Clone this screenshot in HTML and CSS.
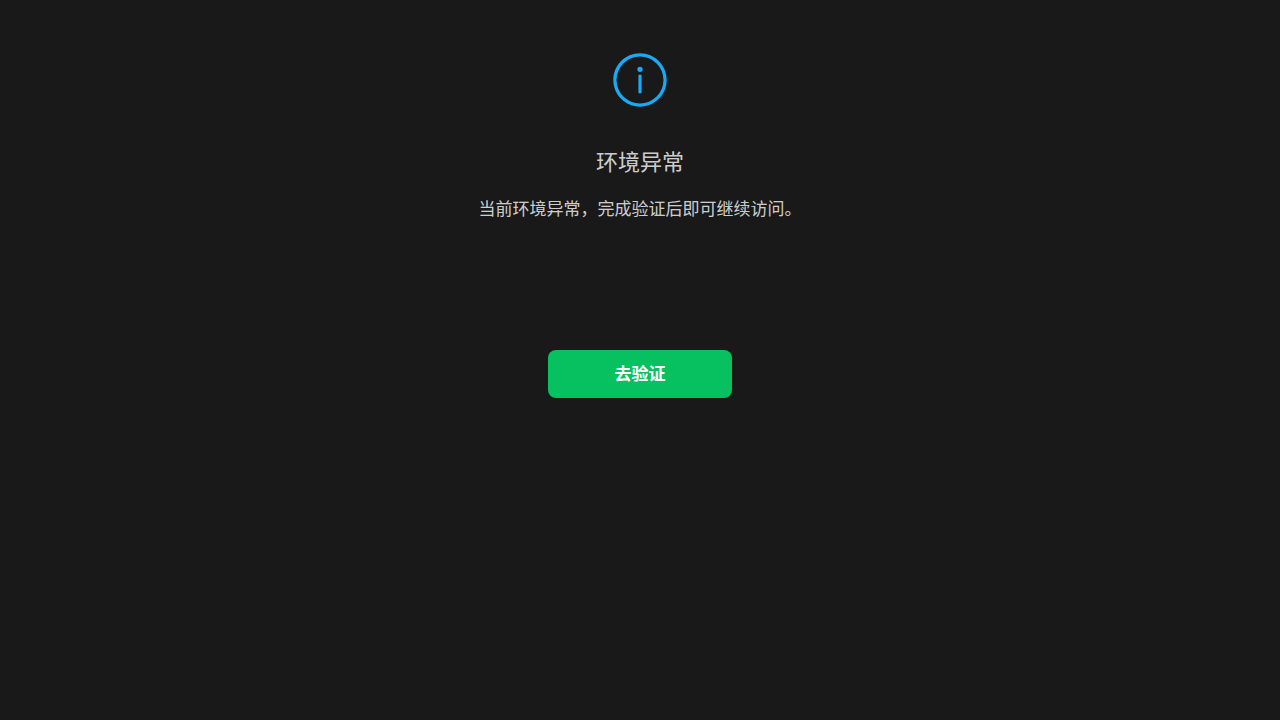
FILE: index.html
```html
<!DOCTYPE html>
<html lang="zh-CN">

<head>
    <meta charset="UTF-8">
    <meta name="viewport" content="width=device-width, initial-scale=1.0">
    <title>环境异常</title>

    <link rel="stylesheet" href="styles.css">
</head>

<body>
    <div class="msg">
        <div class="msg-icon">
            <svg viewBox="0 0 24 24" width="64" height="64">
                <path fill-rule="evenodd" d="M12 22C6.477 22 2 17.523 2 12S6.477 2 12 2s10 4.477 10 10-4.477 10-10 10zm0-1.2a8.8 8.8 0 1 0 0-17.6 8.8 8.8 0 0 0 0 17.6zM11.4 10h1.2v7h-1.2v-7zm.6-1a1 1 0 1 1 0-2 1 1 0 0 1 0 2z" />
            </svg>
        </div>
        <div class="msg-text">
            <h2 class="msg-title">环境异常</h2>
            <p class="msg-desc">当前环境异常，完成验证后即可继续访问。</p>
        </div>
        <div class="msg-opr">
            <a class="btn" href="#">去验证</a>
        </div>
    </div>
</body>

</html>
```
FILE: styles.css
```css
* {
    margin: 0;
    padding: 0;
    box-sizing: border-box;
}

body {
    background-color: #191919;
    color: rgba(255, 255, 255, 0.8);
    font-family: "Liberation Sans", "Noto Sans CJK SC", sans-serif;
}

.msg {
    display: flex;
    flex-direction: column;
    align-items: center;
    min-height: 100vh;
    padding-top: 48px;
    text-align: center;
}

.msg-icon {
    margin-bottom: 35px;
}

.msg-icon svg {
    display: block;
    fill: #1aaaf5;
}

.msg-text {
    padding: 0 32px;
}

.msg-title {
    margin-bottom: 20px;
    font-size: 22px;
    font-weight: 400;
    line-height: 31px;
}

.msg-desc {
    font-size: 17px;
    line-height: 24px;
}

.msg-opr {
    margin-top: 128px;
}

.btn {
    display: block;
    width: 184px;
    padding: 13px 24px 11px;
    border-radius: 8px;
    background-color: #07c160;
    color: #fff;
    font-size: 17px;
    font-weight: 700;
    line-height: 24px;
    text-decoration: none;
}
```
